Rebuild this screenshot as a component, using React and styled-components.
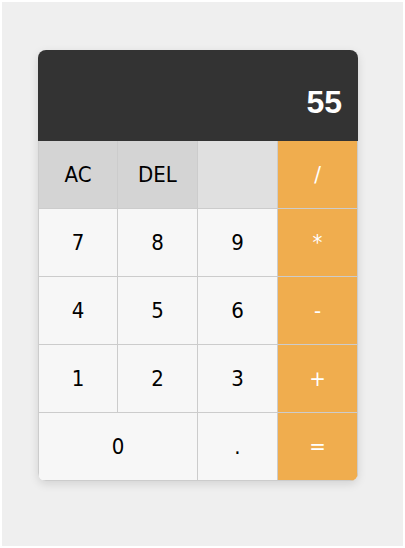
import React from "react";
import styled, { createGlobalStyle } from "styled-components";

const Global = createGlobalStyle`
  html, body { margin: 0; padding: 0; background: #ffffff; }
  #root { padding: 2px; }
`;

const Page = styled.div`
  background: #efefef;
  height: 544px;
  width: 401px;
  box-sizing: border-box;
  padding: 48px 36px;
`;

const Calculator = styled.div`
  width: 320px;
  border-radius: 8px;
  overflow: hidden;
  box-shadow: 0 3px 10px rgba(0, 0, 0, 0.12);
`;

const Display = styled.div`
  height: 91px;
  box-sizing: border-box;
  background: #333333;
  color: #ffffff;
  display: flex;
  align-items: flex-end;
  justify-content: flex-end;
  padding: 0 16px 20px;
  font-family: "Liberation Sans", Arial, sans-serif;
  font-weight: bold;
  font-size: 32px;
  line-height: 1.15;
`;

const Keys = styled.div`
  display: grid;
  grid-template-columns: repeat(4, 80px);
  grid-auto-rows: 68px;
`;

const bg = { fn: "#d4d4d4", blank: "#e0e0e0", num: "#f7f7f7", op: "#f0ad4e" };

const Key = styled.button`
  grid-column: span ${(p) => p.$span || 1};
  box-sizing: border-box;
  margin: 0;
  padding: 0;
  border: none;
  border-left: ${(p) => (p.$first ? "1px solid #cccccc" : "none")};
  border-right: 1px solid #cccccc;
  border-bottom: 1px solid #cccccc;
  background: ${(p) => bg[p.$kind || "num"]};
  color: ${(p) => (p.$kind === "op" ? "#ffffff" : "#000000")};
  font-family: "DejaVu Sans Condensed", Tahoma, "Noto Sans", sans-serif;
  font-size: 22px;
  display: flex;
  align-items: center;
  justify-content: center;
  cursor: pointer;
`;

const keys = [
  ["AC", "fn", 1, true], ["DEL", "fn"], ["", "blank"], ["/", "op"],
  ["7", "num", 1, true], ["8"], ["9"], ["*", "op"],
  ["4", "num", 1, true], ["5"], ["6"], ["-", "op"],
  ["1", "num", 1, true], ["2"], ["3"], ["+", "op"],
  ["0", "num", 2, true], ["."], ["=", "op"],
];

export default function App() {
  return (
    <>
      <Global />
      <Page>
        <Calculator>
          <Display>55</Display>
          <Keys>
            {keys.map(([label, kind, span, first], i) => (
              <Key key={i} $kind={kind} $span={span} $first={first}>{label}</Key>
            ))}
          </Keys>
        </Calculator>
      </Page>
    </>
  );
}
